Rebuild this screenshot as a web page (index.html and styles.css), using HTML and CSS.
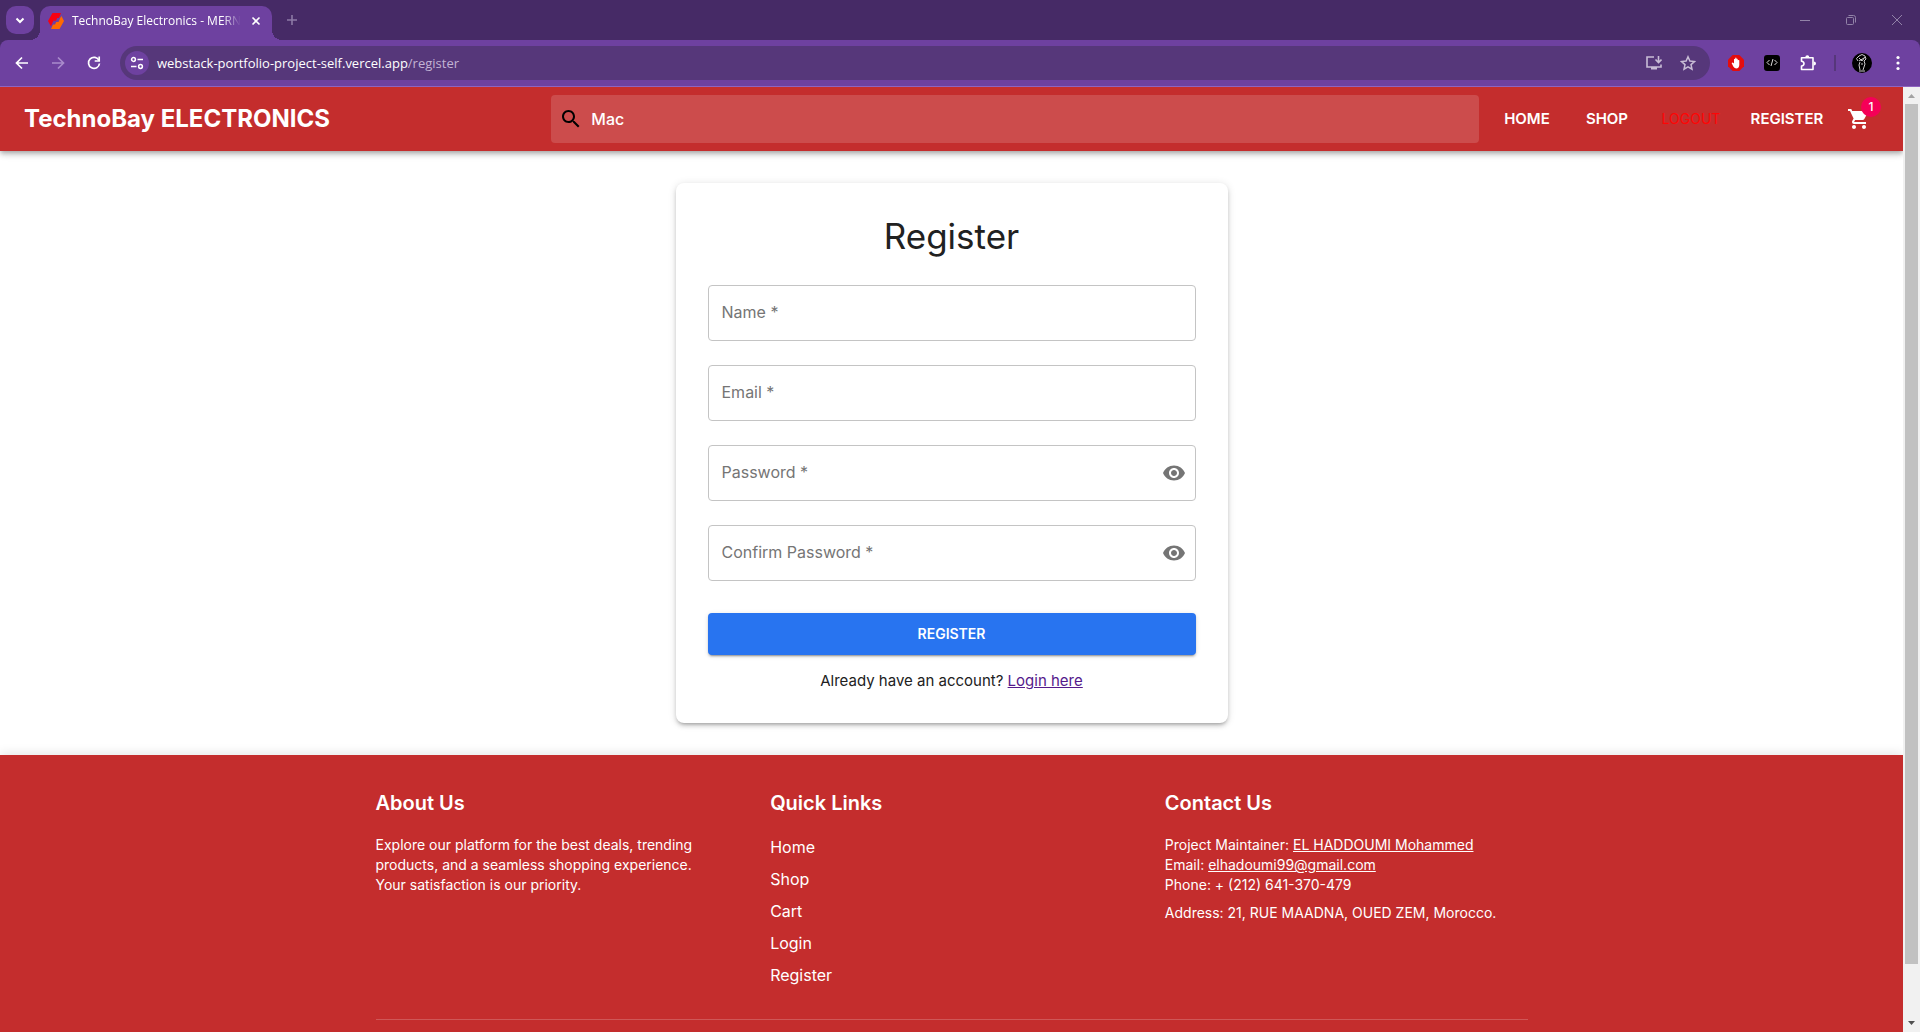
FILE: index.html
```html
<!DOCTYPE html>
<html lang="en">
<head>
<meta charset="utf-8">
<meta name="viewport" content="width=device-width, initial-scale=1">
<title>TechnoBay Electronics - MERN E</title>
<link rel="stylesheet" href="styles.css">
</head>
<body>
<div class="browser">
  <div class="tabstrip">
    <button class="tab-search" aria-label="Search tabs"><svg width="28" height="28" viewBox="0 0 28 28"><path d="M10.500 12.500l3.500 3.500 3.500-3.500" fill="none" stroke="#fff" stroke-width="2"/></svg></button>
    <div class="tab">
      <svg class="favicon" width="16" height="16" viewBox="0 0 16 16"><path d="M4.500 0H13l-2 5H9.200L8 7.800H5.500L6.800 4.500 4 11 3 13.500 0 8z" fill="#f80012"/><path d="M11.500 16H3l2-4.500h2L8.200 9h2.500L9.500 11.500 12.200 5 13.500 3 16 8z" fill="#ff6a00"/></svg>
      <span class="tab-title">TechnoBay Electronics - MERN E</span>
      <button class="tab-close" aria-label="Close tab"><svg width="16" height="16" viewBox="0 0 16 16"><path d="M4.500 4.500l7 7m0-7l-7 7" stroke="#fff" stroke-width="1.600"/></svg></button>
    </div>
    <button class="new-tab" aria-label="New tab"><svg width="28" height="28" viewBox="0 0 28 28"><path d="M14 9v10M9 14h10" stroke="#8d7aa6" stroke-width="1.600"/></svg></button>
    <div class="window-controls">
      <button aria-label="Minimize"><svg width="46" height="40" viewBox="0 0 46 40"><path d="M18 20.500h10" stroke="#9283a8"/></svg></button>
      <button aria-label="Restore"><svg width="46" height="40" viewBox="0 0 46 40"><g fill="none" stroke="#9283a8"><rect x="18.500" y="17.500" width="7" height="7" rx="1"/><path d="M20.500 15.500h5a2 2 0 0 1 2 2v5"/></g></svg></button>
      <button aria-label="Close"><svg width="46" height="40" viewBox="0 0 46 40"><path d="M18 15l10 10m0-10L18 25" stroke="#9283a8"/></svg></button>
    </div>
  </div>
  <div class="toolbar">
    <button class="tool" aria-label="Back"><svg width="16" height="16" viewBox="0 0 16 16"><path d="M14 8H3M8 2.500L2.500 8 8 13.500" fill="none" stroke="#fff" stroke-width="1.700"/></svg></button>
    <button class="tool" aria-label="Forward"><svg width="16" height="16" viewBox="0 0 16 16"><path d="M2 8h11M8 2.500L13.500 8 8 13.500" fill="none" stroke="#a98bcb" stroke-width="1.700"/></svg></button>
    <button class="tool" aria-label="Reload"><svg width="16" height="16" viewBox="0 0 16 16"><path d="M13 5.500A5.500 5.500 0 1 0 13.500 8.500" fill="none" stroke="#fff" stroke-width="1.700"/><path d="M13.200 1.500V6H8.700" fill="none" stroke="#fff" stroke-width="1.700"/></svg></button>
    <div class="omnibox">
      <button class="site-info" aria-label="Site information"><svg width="16" height="16" viewBox="0 0 16 16"><g fill="none" stroke="#fff" stroke-width="1.500"><circle cx="4.500" cy="4.500" r="1.900"/><path d="M8.500 4.500H14M2 11.500h5.500"/><circle cx="11.500" cy="11.500" r="1.900"/></g></svg></button>
      <div class="url"><span>webstack-portfolio-project-self.vercel.app</span><span class="url-path">/register</span></div>
      <button class="tool" aria-label="Install app"><svg width="16" height="16" viewBox="0 0 16 16"><path d="M8 2H1v10h14V9.500" fill="none" stroke="#c9bdd6" stroke-width="1.600"/><path d="M5 12h6v2.500H5z" fill="#c9bdd6"/><path d="M12.500 1v6M9.500 4.500l3 3 3-3" fill="none" stroke="#c9bdd6" stroke-width="1.600"/></svg></button>
      <button class="tool bookmark" aria-label="Bookmark"><svg width="16" height="16" viewBox="0 0 16 16"><path d="M8 1.800l1.900 4.300 4.600.4-3.500 3.100 1 4.600L8 11.800l-4 2.400 1-4.600L1.500 6.500l4.600-.4z" fill="none" stroke="#c9bdd6" stroke-width="1.500"/></svg></button>
    </div>
    <div class="extensions">
      <button class="tool" aria-label="Ad blocker"><svg width="16" height="16" viewBox="0 0 16 16"><path d="M4.700 0h6.600L16 4.700v6.600L11.300 16H4.700L0 11.300V4.700z" fill="#e40d0d"/><path d="M3.600 8l1.200-.6 1.200 1.200V4.200q.6-.8 1.200 0V3q.7-.8 1.300 0v1q.7-.7 1.200 0v1.200q.9-.6 1.600 0v4.500q0 3.700-3.200 3.700-2 0-2.800-1.800z" fill="#fff"/></svg></button>
      <button class="tool" aria-label="Code extension"><svg width="16" height="16" viewBox="0 0 16 16"><rect width="16" height="16" rx="3"/><path d="M5.500 5L3 7.500 5.500 10M10.500 5L13 7.500 10.500 10M9 4L7 11" fill="none" stroke="#ddd"/></svg></button>
      <button class="tool" aria-label="Extensions"><svg width="16" height="16" viewBox="0 0 16 16"><path d="M1.500 2.800H13v11.700H1.500v-3.500q2.500-.2 2.500-2.400t-2.500-2.400z" fill="none" stroke="#fff" stroke-width="1.600" stroke-linejoin="round"/><path d="M5.300 2.300q0-2 2-2t2 2zM13.700 6.600q2.300 0 2.300 2t-2.300 2z" fill="#fff"/></svg></button>
      <span class="tool-divider"></span>
      <button class="tool" aria-label="Profile"><svg width="20" height="20" viewBox="0 0 20 20"><circle cx="10" cy="10" r="10"/><path d="M6 8L4.500 5.500 7 3l3-1.500 3 1.500 1 3-2 2M7 8l5-3M7 5l3 3 3-4M8 9l-1 3 1 5M12 8l1 3-2 6M9 11h2M7 18h6" fill="none" stroke="#ccc" stroke-width="1"/></svg></button>
      <button class="tool" aria-label="Menu"><svg width="16" height="16" viewBox="0 0 16 16"><g fill="#fff"><circle cx="8" cy="2.500" r="1.600"/><circle cx="8" cy="8" r="1.600"/><circle cx="8" cy="13.500" r="1.600"/></g></svg></button>
    </div>
  </div>
</div>

<div class="viewport">
  <div class="page">
    <header class="navbar">
      <a class="brand" href="#">TechnoBay ELECTRONICS</a>
      <label class="search">
        <svg width="24" height="24" viewBox="0 0 24 24"><path d="M15.500 14h-.79l-.28-.27C15.410 12.590 16 11.110 16 9.500 16 5.910 13.090 3 9.500 3S3 5.910 3 9.500 5.910 16 9.500 16c1.610 0 3.090-.59 4.230-1.570l.27.28v.79l5 4.990L20.490 19l-4.990-5zm-6 0C7.010 14 5 11.990 5 9.500S7.010 5 9.500 5 14 7.010 14 9.500 11.990 14 9.500 14z"/></svg>
        <input type="text" value="Mac" aria-label="Search products">
      </label>
      <nav class="nav">
        <a href="#">HOME</a>
        <a href="#">SHOP</a>
        <button class="logout">LOGOUT</button>
        <a href="#" class="nav-register">REGISTER</a>
        <a href="#" class="cart" aria-label="Cart">
          <svg width="24" height="24" viewBox="0 0 24 24"><path fill="#fff" d="M7 18c-1.100 0-1.990.9-1.990 2S5.900 22 7 22s2-.9 2-2-.9-2-2-2zM1 2v2h2l3.600 7.590-1.350 2.450c-.16.280-.25.610-.25.960 0 1.100.9 2 2 2h12v-2H7.420c-.14 0-.25-.11-.25-.25l.03-.12.900-1.630h7.450c.75 0 1.410-.41 1.750-1.030l3.580-6.490c.08-.14.120-.31.120-.48 0-.55-.45-1-1-1H5.210l-.94-2H1zm16 16c-1.100 0-1.990.9-1.990 2s.89 2 1.990 2 2-.9 2-2-.9-2-2-2z"/></svg>
          <span class="badge">1</span>
        </a>
      </nav>
    </header>

    <main class="main">
      <form class="card">
        <h1>Register</h1>
        <div class="field"><input type="text" placeholder="Name *" aria-label="Name"></div>
        <div class="field"><input type="email" placeholder="Email *" aria-label="Email"></div>
        <div class="field"><input type="password" placeholder="Password *" aria-label="Password"><button type="button" aria-label="Show password"><svg width="24" height="24" viewBox="0 0 24 24"><path fill="#757575" d="M12 4.500C7 4.500 2.730 7.610 1 12c1.730 4.390 6 7.500 11 7.500s9.270-3.110 11-7.500c-1.730-4.390-6-7.500-11-7.500zM12 17c-2.760 0-5-2.240-5-5s2.240-5 5-5 5 2.240 5 5-2.240 5-5 5zm0-8c-1.660 0-3 1.340-3 3s1.340 3 3 3 3-1.340 3-3-1.340-3-3-3z"/></svg></button></div>
        <div class="field"><input type="password" placeholder="Confirm Password *" aria-label="Confirm password"><button type="button" aria-label="Show password"><svg width="24" height="24" viewBox="0 0 24 24"><path fill="#757575" d="M12 4.500C7 4.500 2.730 7.610 1 12c1.730 4.390 6 7.500 11 7.500s9.270-3.110 11-7.500c-1.730-4.390-6-7.500-11-7.500zM12 17c-2.760 0-5-2.240-5-5s2.240-5 5-5 5 2.240 5 5-2.240 5-5 5zm0-8c-1.660 0-3 1.340-3 3s1.340 3 3 3 3-1.340 3-3-1.340-3-3-3z"/></svg></button></div>
        <button class="submit" type="button">REGISTER</button>
        <p class="login">Already have an account? <a href="#">Login here</a></p>
      </form>
    </main>

    <footer class="footer">
      <div class="footer-inner">
        <section>
          <h2>About Us</h2>
          <p class="about">Explore our platform for the best deals, trending products, and a seamless shopping experience. Your satisfaction is our priority.</p>
        </section>
        <section>
          <h2>Quick Links</h2>
          <ul>
            <li><a href="#">Home</a></li>
            <li><a href="#">Shop</a></li>
            <li><a href="#">Cart</a></li>
            <li><a href="#">Login</a></li>
            <li><a href="#">Register</a></li>
          </ul>
        </section>
        <section class="contact">
          <h2>Contact Us</h2>
          <p>Project Maintainer: <a href="#">EL HADDOUMI Mohammed</a><br>Email: <a href="#">elhadoumi99@gmail.com</a><br>Phone: + (212) 641-370-479</p>
          <p>Address: 21, RUE MAADNA, OUED ZEM, Morocco.</p>
        </section>
      </div>
    </footer>
  </div>
  <div class="scrollbar" aria-hidden="true">
    <svg width="17" height="17" viewBox="0 0 17 17"><path d="M5 11l3.500-4 3.500 4z" fill="#a3a3a3"/></svg>
    <div class="track"><div class="thumb"></div><div class="track-rest"></div></div>
    <svg width="17" height="17" viewBox="0 0 17 17"><path d="M5 6l3.500 4L12 6z" fill="#505050"/></svg>
  </div>
</div>
</body>
</html>
```
FILE: styles.css
```css
* { box-sizing: border-box; }

body {
  margin: 0;
  height: 100vh;
  overflow: hidden;
  display: flex;
  flex-direction: column;
  font-family: Inter, "Open Sans", sans-serif;
  font-size: 14px;
  line-height: 20px;
  background: #fff;
}

button {
  border: 0;
  padding: 0;
  background: none;
  font: inherit;
  cursor: pointer;
}

svg { display: block; flex: none; }
h1, h2, p, ul { margin: 0; padding: 0; }

/* Browser chrome */
.browser {
  flex: none;
  background: #462a66;
  color: #fff;
  font-family: "Open Sans", "Noto Sans", sans-serif;
}

.tabstrip {
  display: flex;
  align-items: center;
  height: 40px;
  padding-left: 6px;
}

.tab-search {
  width: 28px;
  height: 28px;
  border-radius: 10px;
  background: #6e41a0;
}

.tab {
  position: relative;
  align-self: flex-end;
  display: flex;
  align-items: center;
  width: 232px;
  height: 34px;
  margin-left: 6px;
  padding: 0 8px 4px;
  border-radius: 10px 10px 0 0;
  background: #6e41a0;
}

.tab::before,
.tab::after {
  content: "";
  position: absolute;
  bottom: 0;
  width: 10px;
  height: 10px;
}

.tab::before {
  right: 100%;
  background: radial-gradient(circle at 0 0, transparent 10px, #6e41a0 10px);
}

.tab::after {
  left: 100%;
  background: radial-gradient(circle at 100% 0, transparent 10px, #6e41a0 10px);
}

.tab-title {
  flex: 1;
  min-width: 0;
  padding-left: 8px;
  white-space: nowrap;
  font-size: 12px;
  mask-image: linear-gradient(to right, #000 86%, transparent 96%);
}

.new-tab { margin-left: 6px; }
.window-controls { display: flex; margin-left: auto; }

.toolbar {
  display: flex;
  align-items: center;
  height: 47px;
  padding: 0 4px 1px;
  border-bottom: 1px solid #8f64c0;
  border-radius: 8px 8px 0 0;
  background: #6e41a0;
}

.tool {
  display: grid;
  place-items: center;
  flex: none;
  width: 36px;
  height: 34px;
}

.omnibox {
  flex: 1;
  display: flex;
  align-items: center;
  height: 34px;
  margin-left: 8px;
  padding: 0 6px 0 5px;
  border-radius: 17px;
  background: #56377a;
}

.bookmark { width: 32px; }

.site-info {
  display: grid;
  place-items: center;
  width: 24px;
  height: 24px;
  border-radius: 12px;
  background: #6e41a0;
}

.url {
  flex: 1;
  padding-left: 8px;
  font-size: 13px;
}

.url-path { color: #c3b3d4; }

.extensions {
  display: flex;
  align-items: center;
  padding-left: 8px;
}

.tool-divider {
  width: 2px;
  height: 16px;
  margin: 0 8px;
  background: #56377a;
}

/* Page */
.viewport {
  flex: 1;
  min-height: 0;
  display: flex;
}

.page {
  flex: 1;
  min-width: 0;
  display: flex;
  flex-direction: column;
  overflow: hidden;
}

.navbar {
  position: relative;
  flex: none;
  display: grid;
  grid-template-columns: minmax(0, 527fr) minmax(0, 927fr) auto;
  align-items: center;
  height: 64px;
  padding: 0 20px 0 24px;
  background: #c42d2d;
  box-shadow: 0 2px 4px -1px rgba(0, 0, 0, .2), 0 4px 5px rgba(0, 0, 0, .14), 0 1px 10px rgba(0, 0, 0, .12);
}

.brand {
  color: #fff;
  font-size: 24px;
  font-weight: 700;
  text-decoration: none;
  white-space: nowrap;
}

.search {
  display: flex;
  align-items: center;
  gap: 8px;
  height: 48px;
  padding: 0 8px;
  border-radius: 4px;
  background: rgba(255, 255, 255, .15);
}

.search input {
  flex: 1;
  min-width: 0;
  padding: 0;
  border: 0;
  outline: 0;
  background: none;
  color: #fff;
  font: 500 16px/24px Inter, sans-serif;
}

.nav {
  display: flex;
  align-items: center;
  gap: 16px;
  padding-left: 16px;
}

.nav a {
  min-width: 64px;
  color: #fff;
  font-size: 15px;
  font-weight: 600;
  text-align: center;
  text-decoration: none;
}

.nav .logout {
  width: 72px;
  color: #ff0505;
}

.nav .nav-register { min-width: 88px; }

.nav .cart {
  position: relative;
  display: grid;
  place-items: center;
  min-width: 48px;
  height: 48px;
  margin-left: -12px;
}

.nav .badge {
  position: absolute;
  top: 2px;
  right: 2px;
  width: 20px;
  height: 20px;
  border-radius: 10px;
  background: #f50057;
  font-size: 12px;
  font-weight: 500;
}

.main {
  flex: none;
  padding: 32px 24px;
}

.card {
  max-width: 552px;
  margin: 0 auto;
  padding: 32px;
  border-radius: 8px;
  background: #fff;
  box-shadow: 0 3px 3px -2px rgba(0, 0, 0, .2), 0 3px 4px rgba(0, 0, 0, .14), 0 1px 8px rgba(0, 0, 0, .12);
}

.card h1 {
  margin-bottom: 28px;
  color: #212121;
  font-size: 35px;
  font-weight: 400;
  line-height: 42px;
  text-align: center;
}

.field {
  display: flex;
  align-items: center;
  height: 56px;
  margin-bottom: 24px;
  padding: 0 9px 0 13px;
  border: 1px solid #c4c4c4;
  border-radius: 4px;
}

.field input {
  flex: 1;
  min-width: 0;
  padding: 0 0 2px;
  border: 0;
  outline: 0;
  background: none;
  font: 400 16px/24px Inter, sans-serif;
}

.field input::placeholder { color: #757575; opacity: 1; }

.submit {
  width: 100%;
  height: 42px;
  margin-top: 8px;
  border-radius: 4px;
  background: #2874f0;
  box-shadow: 0 3px 1px -2px rgba(0, 0, 0, .2), 0 2px 2px rgba(0, 0, 0, .14), 0 1px 5px rgba(0, 0, 0, .12);
  color: #fff;
  font-weight: 600;
}

.login {
  margin-top: 16px;
  color: #212121;
  font-size: 15px;
  text-align: center;
}

.login a { color: #551a8b; }

.footer {
  flex: 1 0 auto;
  padding: 32px 24px;
  background: #c42d2d;
  box-shadow: 0 -2px 10px rgba(0, 0, 0, .1);
  color: #fff;
}

.footer-inner {
  display: grid;
  grid-template-columns: repeat(3, minmax(0, 1fr));
  gap: 32px;
  max-width: 1152px;
  margin: 0 auto;
  padding-bottom: 24px;
  border-bottom: 1px solid rgba(255, 255, 255, .2);
}

.footer h2 {
  margin-bottom: 16px;
  font-size: 20px;
  font-weight: 600;
  line-height: 32px;
}

.footer a { color: #fff; }
.footer ul { list-style: none; }
.footer li { margin-bottom: 8px; font-size: 16px; line-height: 24px; }
.footer li a { text-decoration: none; }
.about { max-width: 340px; }
.contact p { margin-bottom: 8px; }

/* Page scrollbar */
.scrollbar {
  flex: none;
  display: flex;
  flex-direction: column;
  width: 17px;
  background: #f1f1f1;
}

.track {
  flex: 1;
  display: flex;
  flex-direction: column;
  padding: 0 2px;
}

.thumb { flex: 17; background: #c1c1c1; }
.track-rest { flex: 1; }
```
